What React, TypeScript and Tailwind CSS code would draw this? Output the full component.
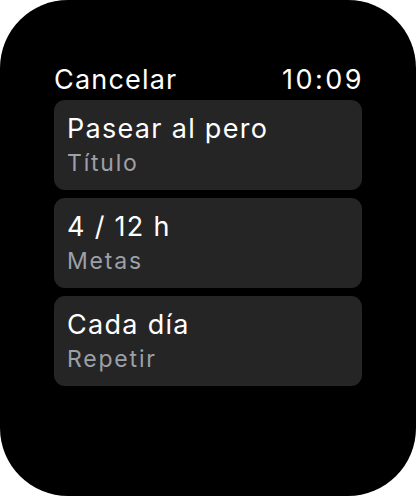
const rows = [
  { value: "Pasear al pero", label: "Título" },
  { value: "4 / 12 h", label: "Metas" },
  { value: "Cada día", label: "Repetir" },
];

export default function App() {
  return (
    <div className="w-[416px] h-[496px] bg-white" style={{ fontFamily: "Inter, 'Noto Sans', sans-serif" }}>
      <div className="w-full h-full bg-black rounded-[68px] px-[54px] pt-[63px]">
        <div className="flex items-center justify-between h-[32px] text-white text-[27px] leading-none tracking-[1.2px]">
          <span>Cancelar</span>
          <span className="tracking-[2.5px] -mr-[2px]">10:09</span>
        </div>
        <div className="flex flex-col gap-2 mt-[5px]">
          {rows.map((row) => (
            <div key={row.label} className="h-[90px] rounded-[11px] bg-[#252525] px-[13px] pt-[13px]">
              <div className="text-white text-[27px] leading-[32px] tracking-[1.3px]">{row.value}</div>
              <div className="mt-[3px] text-[#9ca0a8] text-[23px] leading-[30px] tracking-[1.8px]">{row.label}</div>
            </div>
          ))}
        </div>
      </div>
    </div>
  );
}
